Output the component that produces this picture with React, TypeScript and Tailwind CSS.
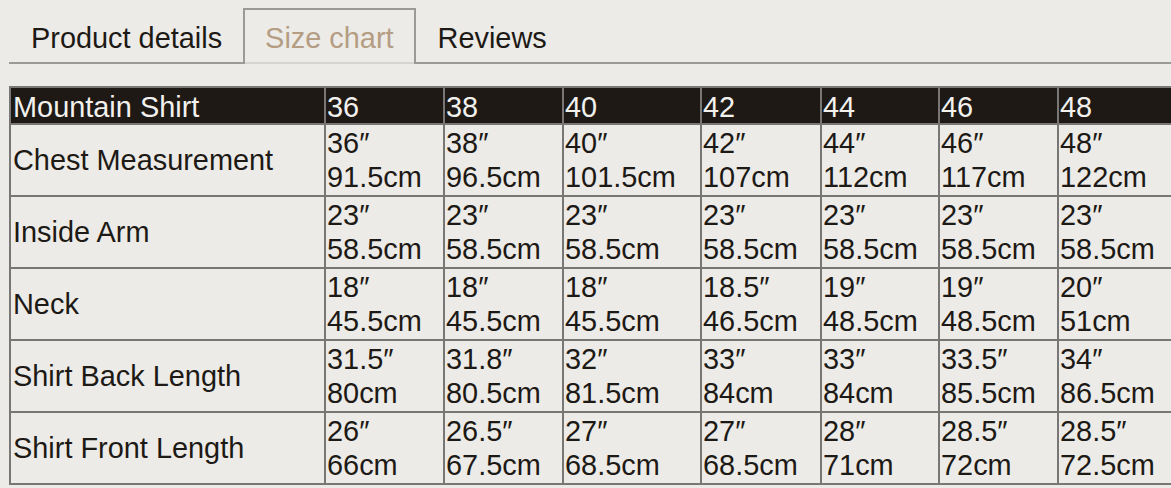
import React from 'react'

const sizes = ['36', '38', '40', '42', '44', '46', '48']

const rows: { label: string; values: [string, string][] }[] = [
  {
    label: 'Chest Measurement',
    values: [
      ['36″', '91.5cm'],
      ['38″', '96.5cm'],
      ['40″', '101.5cm'],
      ['42″', '107cm'],
      ['44″', '112cm'],
      ['46″', '117cm'],
      ['48″', '122cm'],
    ],
  },
  {
    label: 'Inside Arm',
    values: [
      ['23″', '58.5cm'],
      ['23″', '58.5cm'],
      ['23″', '58.5cm'],
      ['23″', '58.5cm'],
      ['23″', '58.5cm'],
      ['23″', '58.5cm'],
      ['23″', '58.5cm'],
    ],
  },
  {
    label: 'Neck',
    values: [
      ['18″', '45.5cm'],
      ['18″', '45.5cm'],
      ['18″', '45.5cm'],
      ['18.5″', '46.5cm'],
      ['19″', '48.5cm'],
      ['19″', '48.5cm'],
      ['20″', '51cm'],
    ],
  },
  {
    label: 'Shirt Back Length',
    values: [
      ['31.5″', '80cm'],
      ['31.8″', '80.5cm'],
      ['32″', '81.5cm'],
      ['33″', '84cm'],
      ['33″', '84cm'],
      ['33.5″', '85.5cm'],
      ['34″', '86.5cm'],
    ],
  },
  {
    label: 'Shirt Front Length',
    values: [
      ['26″', '66cm'],
      ['26.5″', '67.5cm'],
      ['27″', '68.5cm'],
      ['27″', '68.5cm'],
      ['28″', '71cm'],
      ['28.5″', '72cm'],
      ['28.5″', '72.5cm'],
    ],
  },
]

const tabs = ['Product details', 'Size chart', 'Reviews']

const App = () => {
  return (
    <div
      className="w-[1171px] h-[488px] overflow-hidden bg-[#ecebe7] text-[#1d1915] text-[28.9px] leading-[35px]"
      style={{ fontFamily: '"Liberation Sans", Arial, sans-serif' }}
    >
      {/* Tabs */}
      <div className="ml-[9px] pt-[8px] flex border-b-2 border-[#9a9a98]">
        {tabs.map((tab) => {
          const active = tab === 'Size chart'
          return active ? (
            <div
              key={tab}
              className="-mb-[2px] px-[20px] pt-[11px] pb-[6px] border-2 border-b-0 border-[#9a9a98] text-[#b49d83] shadow-[inset_0_-2px_0_#d6d4d0]"
            >
              {tab}
            </div>
          ) : (
            <div key={tab} className="pl-[22px] pr-[21px] pt-[13px] pb-[6px]">
              {tab}
            </div>
          )
        })}
      </div>

      {/* Size table */}
      <div className="ml-[9px] mt-[22px] w-[1200px]">
        <div className="grid grid-cols-[313px_117px_117px_136px_118px_116px_117px_117px_40px] gap-[2px] bg-[#787775] p-[2px] w-max">
          <div className="bg-[#1e1915] text-[#f2f1ee] pl-[2px] pt-[2px] h-[35px]">Mountain Shirt</div>
          {sizes.map((s) => (
            <div key={s} className="bg-[#1e1915] text-[#f2f1ee] pl-[1px] pt-[2px] h-[35px]">
              {s}
            </div>
          ))}
          <div className="bg-[#1e1915] h-[35px]" />

          {rows.map((row) => (
            <React.Fragment key={row.label}>
              <div className="bg-[#ecebe7] pl-[2px] h-[70px] flex items-center pt-[1px]">{row.label}</div>
              {row.values.map(([inch, cm], i) => (
                <div key={i} className="bg-[#ecebe7] pl-[1px] pt-[1px] h-[70px]">
                  <div>{inch}</div>
                  <div className="-mt-[1px]">{cm}</div>
                </div>
              ))}
              <div className="bg-[#ecebe7]" />
            </React.Fragment>
          ))}
        </div>
      </div>
    </div>
  )
}

export default App
